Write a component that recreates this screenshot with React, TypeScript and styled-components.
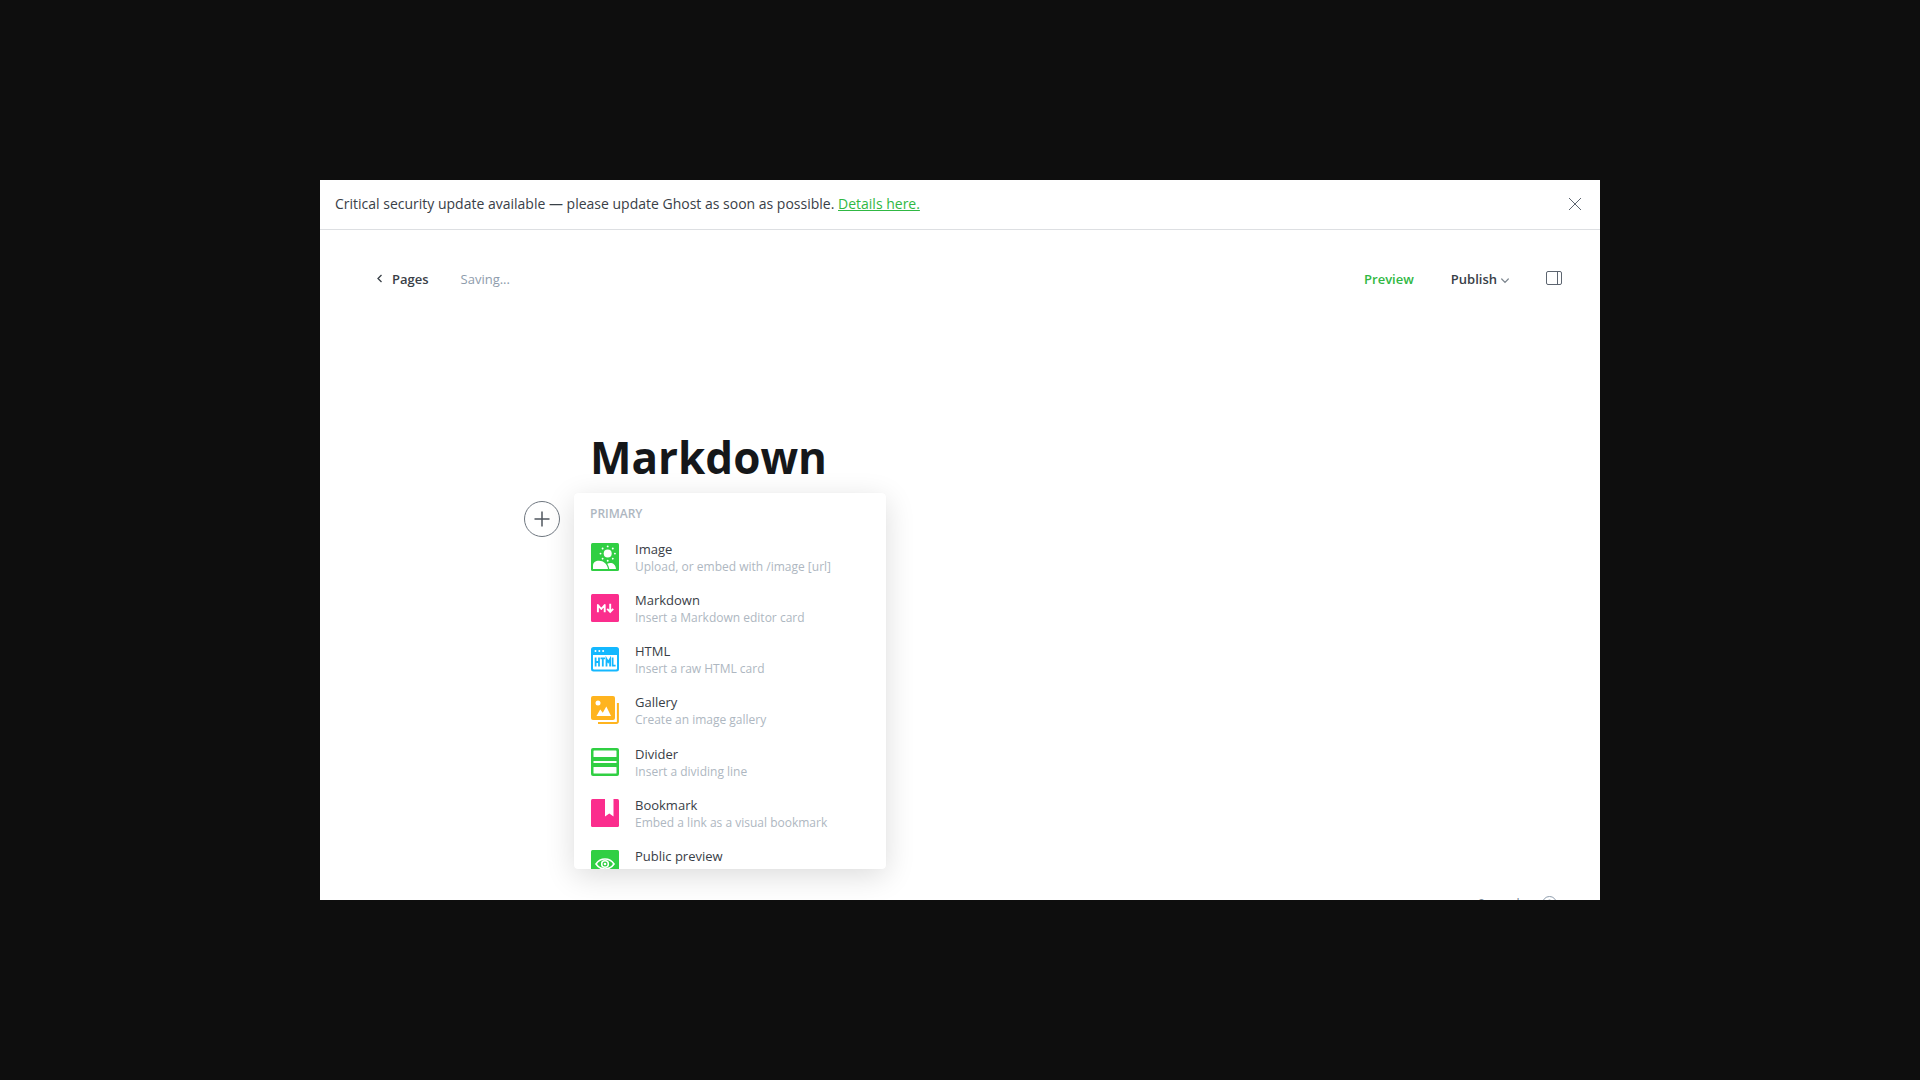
import React, { useState } from "react";
import styled, { createGlobalStyle } from "styled-components";

const sans = `"Open Sans", "Noto Sans", "Liberation Sans", sans-serif`;

const GlobalStyle = createGlobalStyle`
  *, *::before, *::after { box-sizing: border-box; }
  body { margin: 0; background: #0e0e0e; font-family: ${sans}; color: #394047; }
  button, input { font-family: inherit; color: inherit; }
`;

const Stage = styled.div`
  min-height: 100vh;
  display: grid;
  grid-template-columns: 1fr;
  padding: 180px calc(100% / 6);
`;

const Window = styled.div`
  position: relative;
  display: flex;
  flex-direction: column;
  overflow: hidden;
  background: #fff;
`;

const Alert = styled.aside`
  display: flex;
  align-items: center;
  justify-content: space-between;
  height: 50px;
  padding: 0 16px 2px 15px;
  border-bottom: 1px solid #dddfe2;
  font-size: 14px;
  line-height: 20px;
`;

const AlertLink = styled.a`
  color: #30b843;
  text-decoration: underline;
`;

const IconButton = styled.button`
  display: grid;
  place-items: center;
  padding: 0;
  border: 0;
  background: none;
  cursor: pointer;
`;

const Header = styled.header`
  display: flex;
  align-items: center;
  justify-content: space-between;
  height: 98px;
  padding: 0 38px 0 56px;
  font-size: 13px;
  line-height: 20px;
`;

const HeaderGroup = styled.div<{ $gap: number }>`
  display: flex;
  align-items: center;
  gap: ${(p) => p.$gap}px;
`;

const BackLink = styled.a`
  display: flex;
  align-items: center;
  gap: 8px;
  color: #394047;
  font-weight: 600;
  text-decoration: none;
`;

const Status = styled.span`
  color: #8e9cac;
`;

const TextButton = styled.button<{ $accent?: boolean }>`
  display: flex;
  align-items: center;
  gap: 4px;
  padding: 0;
  border: 0;
  background: none;
  font-size: 13px;
  font-weight: 600;
  line-height: 20px;
  color: ${(p) => (p.$accent ? "#30b843" : "#394047")};
  cursor: pointer;
`;

const Canvas = styled.main`
  width: 100%;
  max-width: 740px;
  margin: 0 auto;
  padding-top: 100px;
`;

const TitleInput = styled.input`
  display: block;
  width: 100%;
  height: 60px;
  padding: 0 0 2px;
  border: 0;
  outline: 0;
  background: none;
  color: #15171a;
  font-size: 44px;
  font-weight: 700;
  line-height: 58px;
`;

const Block = styled.section`
  position: relative;
  height: 52px;
  margin-top: 4px;
`;

const PlusButton = styled(IconButton)`
  position: absolute;
  top: 9px;
  left: -66px;
  width: 36px;
  height: 36px;
  border: 1px solid #6f7780;
  border-radius: 50%;
`;

const Menu = styled.div`
  position: absolute;
  top: 1px;
  left: -16px;
  width: 312px;
  height: 376px;
  overflow: hidden;
  border-radius: 4px;
  background: #fff;
  box-shadow: 0 0 1px rgba(0, 0, 0, 0.04), 0 7px 30px rgba(0, 0, 0, 0.14);
`;

const MenuHeading = styled.h2`
  margin: 0;
  padding: 12px 16px 0;
  color: #aeb7c1;
  font-size: 12px;
  font-weight: 600;
  line-height: 18px;
  text-transform: uppercase;
`;

const MenuList = styled.ul`
  display: grid;
  grid-auto-rows: 1fr;
  height: 359px;
  margin: 8px 0 0;
  padding: 0;
  list-style: none;
`;

const MenuItem = styled.button`
  display: flex;
  align-items: center;
  gap: 16px;
  width: 100%;
  height: 100%;
  padding: 0 17px;
  border: 0;
  background: none;
  text-align: left;
  cursor: pointer;

  svg { flex: none; }
`;

const ItemText = styled.span`
  display: flex;
  flex-direction: column;
  padding-top: 2px;
  line-height: 17px;
`;

const ItemName = styled.span`
  font-size: 13px;
`;

const ItemHint = styled.span`
  color: #aeb7c1;
  font-size: 12px;
`;

const WordCount = styled.footer`
  position: absolute;
  right: 43px;
  bottom: -12px;
  display: flex;
  align-items: center;
  gap: 16px;
  color: #7c8b9a;
  font-size: 13px;
  line-height: 18px;
`;

const CloseIcon = () => (
  <svg width="18" height="18" viewBox="0 0 18 18" stroke="#5d6570" fill="none" aria-hidden="true">
    <path d="M3 3l12 12M15 3L3 15" />
  </svg>
);

const BackIcon = () => (
  <svg width="8" height="12" viewBox="0 0 8 12" fill="none" stroke="#394047" strokeWidth="1.3" aria-hidden="true">
    <path d="M5.5 2L2 5.5L5.5 9" />
  </svg>
);

const ChevronIcon = () => (
  <svg width="8" height="14" viewBox="0 0 8 14" fill="none" stroke="#7c858e" strokeWidth="1.2" strokeLinecap="round" aria-hidden="true">
    <path d="M.7 7L4 10.3L7.3 7" />
  </svg>
);

const SidebarIcon = () => (
  <svg width="16" height="16" viewBox="0 0 16 16" fill="none" stroke="#5d6570" aria-hidden="true">
    <rect x=".5" y=".5" width="15" height="13" rx="1.5" />
    <path d="M11.5 .5v13" />
  </svg>
);

const PlusIcon = () => (
  <svg width="16" height="16" viewBox="0 0 16 16" stroke="#50575f" strokeWidth="1.5" aria-hidden="true">
    <path d="M8 .5v15M.5 8h15" />
  </svg>
);

const HelpIcon = () => (
  <svg width="15" height="15" viewBox="0 0 15 15" fill="none" stroke="#8e9cac" aria-hidden="true">
    <circle cx="7.5" cy="7.5" r="7" />
    <path d="M5.5 6a2 2 0 1 1 2.8 1.8c-.6.3-.8.6-.8 1.4M7.5 10.6v1" />
  </svg>
);

const CardSvg = ({ children }: { children: React.ReactNode }) => (
  <svg width="28" height="28" viewBox="0 0 28 28" aria-hidden="true">
    {children}
  </svg>
);

const ImageIcon = () => (
  <CardSvg>
    <rect width="28" height="28" rx="1.5" fill="#30cf43" />
    <g fill="#fff">
      <circle cx="16.7" cy="10.6" r="4" />
      {[0, 45, 90, 135, 180, 225, 270, 315].map((a) => (
        <circle key={a} cx="16.7" cy="3.4" r=".95" transform={`rotate(${a} 16.7 10.6)`} />
      ))}
      <path d="M2 26v-3.5c0-2.7 2.4-4.7 6-4.7 4.500 0 8 3 9 8.2z" />
      <path d="M18.3 26c-.4-2-1-3.7-2-5.200 1-.5 1.900-.7 2.900-.7 3.100 0 5.400 1.900 5.800 5.900z" />
    </g>
  </CardSvg>
);

const MarkdownIcon = () => (
  <CardSvg>
    <rect width="28" height="28" rx="1.5" fill="#fb2d8d" />
    <g fill="none" stroke="#fff" strokeWidth="1.9">
      <path d="M6.9 18.300v-7.300l3.400 4 3.400-4v7.300" strokeLinejoin="round" />
      <path d="M19.200 9.800v7.500M16.200 14.800l3 3 3-3" />
    </g>
  </CardSvg>
);

const HtmlIcon = () => (
  <CardSvg>
    <rect y="2" width="28" height="24.5" rx="2.5" fill="#14b8ff" />
    <path d="M2 10h24v13.500a1 1 0 0 1-1 1H3a1 1 0 0 1-1-1z" fill="#fff" />
    <g fill="#fff">
      <circle cx="4.5" cy="6" r="1" />
      <circle cx="8.3" cy="6" r="1" />
      <circle cx="12.1" cy="6" r="1" />
    </g>
    <g fill="none" stroke="#14b8ff" strokeWidth="1.8">
      <path d="M4.600 12.500v9M8 12.500v9M4.600 17H8" />
      <path d="M9.500 13.400h4.600M11.800 13.400v8.100" />
      <path d="M15.500 21.500v-7.500l1.800 3 1.800-3v7.500" />
      <path d="M21.600 12.500v8.100h3" />
    </g>
  </CardSvg>
);

const GalleryIcon = () => (
  <CardSvg>
    <rect width="24" height="24" rx="2" fill="#ffb41f" />
    <path d="M26.900 7v18.500a1.400 1.400 0 0 1-1.400 1.400H7" fill="none" stroke="#ffb41f" strokeWidth="2" />
    <g fill="#fff">
      <circle cx="7" cy="7" r="2.5" />
      <path d="M5.500 20l3.700-6.500 2.600 3.200L15.300 10.500 20 20z" />
    </g>
  </CardSvg>
);

const DividerIcon = () => (
  <CardSvg>
    <rect width="28" height="28" rx="2" fill="#30cf43" />
    <g fill="#fff">
      <rect x="2.5" y="2.5" width="23" height="6.5" rx=".6" />
      <rect x="2.5" y="13" width="23" height="2" />
      <rect x="2.5" y="19" width="23" height="6.5" rx=".6" />
    </g>
  </CardSvg>
);

const BookmarkIcon = () => (
  <CardSvg>
    <rect width="28" height="28" rx="1.5" fill="#fb2d8d" />
    <path d="M14 0h8.500v17.500L18.300 14.500 14 17.500z" fill="#fff" />
  </CardSvg>
);

const PreviewIcon = () => (
  <CardSvg>
    <rect width="28" height="28" rx="1.5" fill="#30cf43" />
    <g fill="none" stroke="#fff" strokeWidth="1.6">
      <path d="M5 14c2.200-3.300 5.200-5 9-5s6.800 1.700 9 5c-2.200 3.300-5.200 5-9 5s-6.800-1.700-9-5z" />
      <circle cx="14" cy="14" r="3.3" />
    </g>
    <circle cx="14" cy="14" r="1.3" fill="#fff" />
  </CardSvg>
);

const cards = [
  { name: "Image", hint: "Upload, or embed with /image [url]", Icon: ImageIcon },
  { name: "Markdown", hint: "Insert a Markdown editor card", Icon: MarkdownIcon },
  { name: "HTML", hint: "Insert a raw HTML card", Icon: HtmlIcon },
  { name: "Gallery", hint: "Create an image gallery", Icon: GalleryIcon },
  { name: "Divider", hint: "Insert a dividing line", Icon: DividerIcon },
  { name: "Bookmark", hint: "Embed a link as a visual bookmark", Icon: BookmarkIcon },
  { name: "Public preview", hint: "", Icon: PreviewIcon },
];

export default function App() {
  const [title, setTitle] = useState("Markdown");

  return (
    <>
      <GlobalStyle />
      <Stage>
        <Window>
          <Alert>
            <span>
              Critical security update available — please update Ghost as soon as possible.{" "}
              <AlertLink href="#details">Details here.</AlertLink>
            </span>
            <IconButton aria-label="Close">
              <CloseIcon />
            </IconButton>
          </Alert>
          <Header>
            <HeaderGroup $gap={32}>
              <BackLink href="#pages">
                <BackIcon />
                Pages
              </BackLink>
              <Status>Saving...</Status>
            </HeaderGroup>
            <HeaderGroup $gap={37}>
              <TextButton $accent>Preview</TextButton>
              <TextButton>
                Publish
                <ChevronIcon />
              </TextButton>
              <IconButton aria-label="Settings">
                <SidebarIcon />
              </IconButton>
            </HeaderGroup>
          </Header>
          <Canvas>
            <TitleInput aria-label="Page title" value={title} onChange={(e) => setTitle(e.target.value)} />
            <Block>
              <PlusButton aria-label="Add a card">
                <PlusIcon />
              </PlusButton>
              <Menu>
                <MenuHeading>Primary</MenuHeading>
                <MenuList>
                  {cards.map(({ name, hint, Icon }) => (
                    <li key={name}>
                      <MenuItem>
                        <Icon />
                        <ItemText>
                          <ItemName>{name}</ItemName>
                          <ItemHint>{hint || "\u00a0"}</ItemHint>
                        </ItemText>
                      </MenuItem>
                    </li>
                  ))}
                </MenuList>
              </Menu>
            </Block>
          </Canvas>
          <WordCount>
            <span>0 words</span>
            <HelpIcon />
          </WordCount>
        </Window>
      </Stage>
    </>
  );
}
